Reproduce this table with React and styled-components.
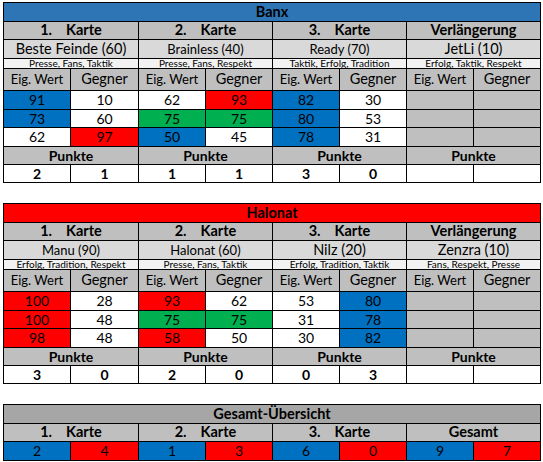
import React from "react";
import styled, { createGlobalStyle } from "styled-components";

const GlobalStyle = createGlobalStyle`
  html, body { margin: 0; padding: 0; background: #ffffff; }
  body { font-family: Lato, "Noto Sans", "Liberation Sans", sans-serif; color: #000; }
`;

const C = {
  blue: "#0070C0",
  red: "#FF0000",
  green: "#00B050",
  white: "#FFFFFF",
  g1: "#BFBFBF",
  g2: "#D9D9D9",
  g3: "#F2F2F2",
  headBlue: "#2E75B6",
  headGray: "#A6A6A6",
};

const Page = styled.div`
  display: flex;
  flex-direction: column;
  gap: 20px;
  padding: 2px 0 0 3px;
`;

const Sheet = styled.div`
  display: grid;
  width: max-content;
  grid-template-columns: 67px 68px repeat(6, 67px);
  grid-template-rows: ${(p) => p.$rows.map((r) => `${r}px`).join(" ")};
  border-left: 1px solid #000;
  border-top: 1px solid #000;
`;

const Cell = styled.div`
  grid-column: span ${(p) => p.$span || 1};
  box-sizing: border-box;
  border-right: 1px solid #000;
  border-bottom: 1px solid #000;
  background: ${(p) => p.$bg || "#fff"};
  font-size: ${(p) => p.$size || 14}px;
  font-weight: ${(p) => (p.$bold ? 700 : 400)};
  line-height: 1;
  display: flex;
  align-items: center;
  justify-content: center;
  white-space: pre;
  overflow: hidden;
  min-width: 0;
`;

const Title = styled(Cell)`
  grid-column: 1 / -1;
  font-size: 14.5px;
  font-weight: 700;
`;

const KarteLabel = styled.span`
  display: inline-flex;
  gap: 14px;
`;

const Trait = styled(Cell)`
  font-size: 10px;
  line-height: 9px;
  overflow: visible;
  position: relative;
`;

const BG = { b: C.blue, r: C.red, g: C.green, w: C.white };

const Karte = ({ n }) => (
  <KarteLabel>
    <span>{n}.</span>
    <span>Karte</span>
  </KarteLabel>
);

const TeamTable = ({ title, color, cards }) => (
  <Sheet $rows={[19, 18, 19, 10, 22, 19, 18, 19, 18, 18]}>
    <Title $bg={color}>{title}</Title>
    {cards.map((c, i) => (
      <Cell key={`k${i}`} $span={2} $bg={C.g1} $bold $size={14.5}>
        {c.ext ? "Verlängerung" : <Karte n={i + 1} />}
      </Cell>
    ))}
    {cards.map((c, i) => (
      <Cell key={`n${i}`} $span={2} $bg={C.g2} $size={c.nameSize}>
        {c.name}
      </Cell>
    ))}
    {cards.map((c, i) => (
      <Trait key={`t${i}`} $span={2} $bg={C.g3}>
        {c.traits}
      </Trait>
    ))}
    {cards.map((c, i) => (
      <React.Fragment key={`h${i}`}>
        <Cell $bg={C.g1} $size={13}>Eig. Wert</Cell>
        <Cell $bg={C.g1} $size={14.5}>Gegner</Cell>
      </React.Fragment>
    ))}
    {[0, 1, 2].map((r) =>
      cards.map((c, i) =>
        c.rows ? (
          <React.Fragment key={`d${r}${i}`}>
            <Cell $bg={BG[c.rows[r][0][1]]}>{c.rows[r][0][0]}</Cell>
            <Cell $bg={BG[c.rows[r][1][1]]}>{c.rows[r][1][0]}</Cell>
          </React.Fragment>
        ) : (
          <React.Fragment key={`d${r}${i}`}>
            <Cell $bg={C.g1} />
            <Cell $bg={C.g1} />
          </React.Fragment>
        )
      )
    )}
    {cards.map((c, i) => (
      <Cell key={`p${i}`} $span={2} $bg={C.g1} $bold>
        Punkte
      </Cell>
    ))}
    {cards.map((c, i) => (
      <React.Fragment key={`s${i}`}>
        <Cell $bold>{c.pts ? c.pts[0] : ""}</Cell>
        <Cell $bold>{c.pts ? c.pts[1] : ""}</Cell>
      </React.Fragment>
    ))}
  </Sheet>
);

const banx = [
  {
    name: "Beste Feinde (60)", nameSize: 14.5, traits: "Presse, Fans, Taktik",
    rows: [[[91, "b"], [10, "w"]], [[73, "b"], [60, "w"]], [[62, "w"], [97, "r"]]],
    pts: [2, 1],
  },
  {
    name: "Brainless (40)", nameSize: 13, traits: "Presse, Fans, Respekt",
    rows: [[[62, "w"], [93, "r"]], [[75, "g"], [75, "g"]], [[50, "b"], [45, "w"]]],
    pts: [1, 1],
  },
  {
    name: "Ready (70)", nameSize: 13, traits: "Taktik, Erfolg, Tradition",
    rows: [[[82, "b"], [30, "w"]], [[80, "b"], [53, "w"]], [[78, "b"], [31, "w"]]],
    pts: [3, 0],
  },
  { ext: true, name: "JetLi (10)", nameSize: 14.5, traits: "Erfolg, Taktik, Respekt" },
];

const halonat = [
  {
    name: "Manu (90)", nameSize: 13, traits: "Erfolg, Tradition, Respekt",
    rows: [[[100, "r"], [28, "w"]], [[100, "r"], [48, "w"]], [[98, "r"], [48, "w"]]],
    pts: [3, 0],
  },
  {
    name: "Halonat (60)", nameSize: 13, traits: "Presse, Fans, Taktik",
    rows: [[[93, "r"], [62, "w"]], [[75, "g"], [75, "g"]], [[58, "r"], [50, "w"]]],
    pts: [2, 0],
  },
  {
    name: "Nilz (20)", nameSize: 14.5, traits: "Erfolg, Tradition, Taktik",
    rows: [[[53, "w"], [80, "b"]], [[31, "w"], [78, "b"]], [[30, "w"], [82, "b"]]],
    pts: [0, 3],
  },
  { ext: true, name: "Zenzra (10)", nameSize: 14.5, traits: "Fans, Respekt, Presse" },
];

const totals = [
  [2, 4],
  [1, 3],
  [6, 0],
  [9, 7],
];

export default function App() {
  return (
    <>
      <GlobalStyle />
      <Page>
        <TeamTable title="Banx" color={C.headBlue} cards={banx} />
        <TeamTable title="Halonat" color={C.red} cards={halonat} />
        <Sheet $rows={[19, 18, 19]}>
          <Title $bg={C.headGray}>Gesamt-Übersicht</Title>
          {[1, 2, 3].map((n) => (
            <Cell key={n} $span={2} $bg={C.g1} $bold $size={14.5}>
              <Karte n={n} />
            </Cell>
          ))}
          <Cell $span={2} $bg={C.g1} $bold $size={14.5}>Gesamt</Cell>
          {totals.map((t, i) => (
            <React.Fragment key={i}>
              <Cell $bg={C.blue}>{t[0]}</Cell>
              <Cell $bg={C.red}>{t[1]}</Cell>
            </React.Fragment>
          ))}
        </Sheet>
      </Page>
    </>
  );
}
